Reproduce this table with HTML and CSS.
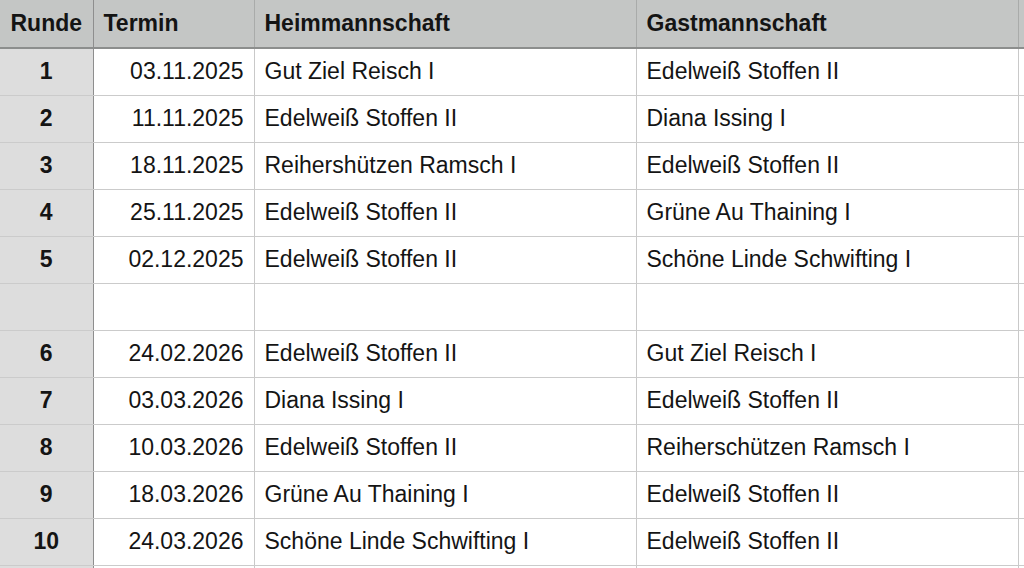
FILE: index.html
```html
<!DOCTYPE html>
<html lang="de">
<head>
<meta charset="utf-8">
<title>Spielplan</title>
<link rel="stylesheet" href="styles.css">
</head>
<body>
<table class="sheet">
  <colgroup>
    <col class="c-runde">
    <col class="c-termin">
    <col class="c-team">
    <col class="c-team">
    <col class="c-rest">
  </colgroup>
  <thead>
    <tr>
      <th class="runde">Runde</th>
      <th>Termin</th>
      <th>Heimmannschaft</th>
      <th>Gastmannschaft</th>
      <th class="rest"></th>
    </tr>
  </thead>
  <tbody>
    <tr><td class="runde">1</td><td class="date">03.11.2025</td><td>Gut Ziel Reisch I</td><td>Edelweiß Stoffen II</td><td class="rest"></td></tr>
    <tr><td class="runde">2</td><td class="date">11.11.2025</td><td>Edelweiß Stoffen II</td><td>Diana Issing I</td><td class="rest"></td></tr>
    <tr><td class="runde">3</td><td class="date">18.11.2025</td><td>Reihershützen Ramsch I</td><td>Edelweiß Stoffen II</td><td class="rest"></td></tr>
    <tr><td class="runde">4</td><td class="date">25.11.2025</td><td>Edelweiß Stoffen II</td><td>Grüne Au Thaining I</td><td class="rest"></td></tr>
    <tr><td class="runde">5</td><td class="date">02.12.2025</td><td>Edelweiß Stoffen II</td><td>Schöne Linde Schwifting I</td><td class="rest"></td></tr>
    <tr><td class="runde"></td><td class="date"></td><td></td><td></td><td class="rest"></td></tr>
    <tr><td class="runde">6</td><td class="date">24.02.2026</td><td>Edelweiß Stoffen II</td><td>Gut Ziel Reisch I</td><td class="rest"></td></tr>
    <tr><td class="runde">7</td><td class="date">03.03.2026</td><td>Diana Issing I</td><td>Edelweiß Stoffen II</td><td class="rest"></td></tr>
    <tr><td class="runde">8</td><td class="date">10.03.2026</td><td>Edelweiß Stoffen II</td><td>Reiherschützen Ramsch I</td><td class="rest"></td></tr>
    <tr><td class="runde">9</td><td class="date">18.03.2026</td><td>Grüne Au Thaining I</td><td>Edelweiß Stoffen II</td><td class="rest"></td></tr>
    <tr><td class="runde">10</td><td class="date">24.03.2026</td><td>Schöne Linde Schwifting I</td><td>Edelweiß Stoffen II</td><td class="rest"></td></tr>
    <tr><td class="runde"></td><td class="date"></td><td></td><td></td><td class="rest"></td></tr>
  </tbody>
</table>
</body>
</html>
```

FILE: styles.css
```css
html, body {
  margin: 0;
  padding: 0;
  background: #ffffff;
  overflow: hidden;
}

.sheet {
  border-collapse: collapse;
  table-layout: fixed;
  width: 1030px;
  font-family: "Liberation Sans", Arial, Helvetica, sans-serif;
  font-size: 23px;
  color: #141414;
}

.c-runde { width: 93px; }
.c-termin { width: 161px; }
.c-team { width: 382px; }
.c-rest { width: 12px; }

.sheet th,
.sheet td {
  padding: 0 10px;
  white-space: nowrap;
  overflow: hidden;
  text-align: left;
  box-sizing: border-box;
}

.sheet th {
  height: 48px;
  background: #c4c6c5;
  font-weight: bold;
  border-right: 1px solid #a9abaa;
  border-bottom: 2px solid #8c8e8d;
}

.sheet td {
  height: 47px;
  border-right: 1px solid #c9c9c9;
  border-bottom: 1px solid #cbcbcb;
}

.sheet .runde {
  text-align: center;
  font-weight: bold;
  background: #dddddd;
  border-right: 1px solid #8e8e8e;
  padding: 0;
}

.sheet th.runde {
  background: #c4c6c5;
}

.sheet .date {
  text-align: right;
}

.sheet .rest {
  padding: 0;
  border-right: none;
}

.sheet th.rest {
  background: #c4c6c5;
}
```
